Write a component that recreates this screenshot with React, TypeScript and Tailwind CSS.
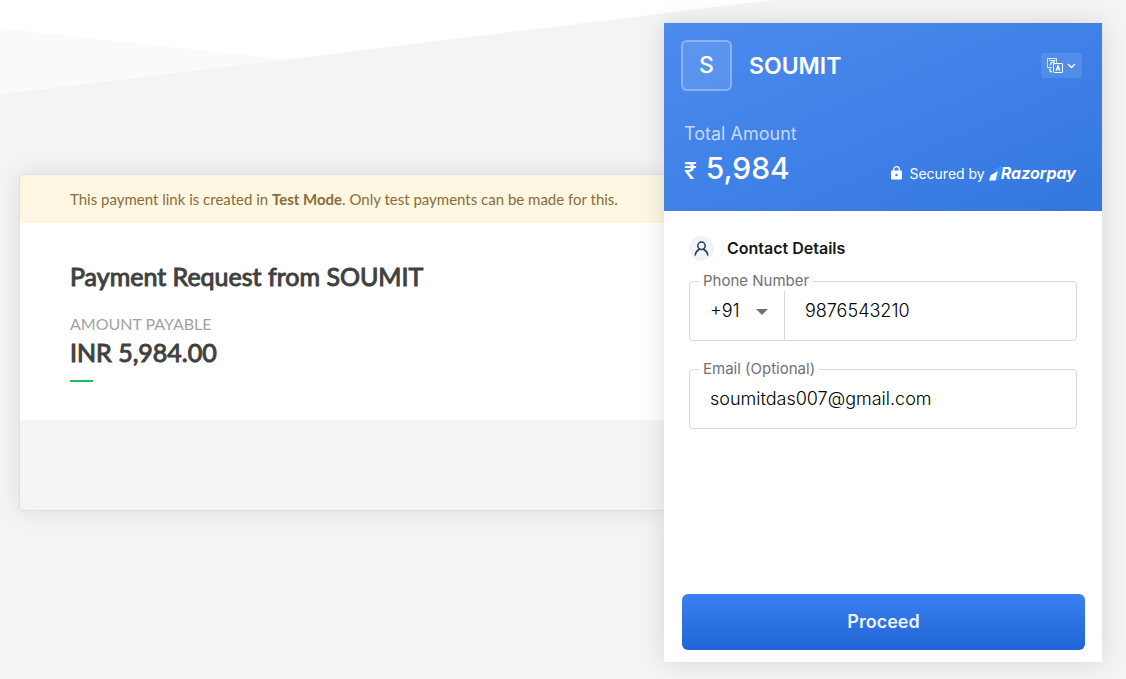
import { useState } from "react";
import type { ReactNode } from "react";

function PageBackdrop() {
  return (
    <svg
      className="absolute left-0 top-0 h-[95px] w-[772px]"
      viewBox="0 0 772 95"
      preserveAspectRatio="none"
      aria-hidden="true"
    >
      <polygon points="0,0 772,0 0,94.5" fill="#fafafa" />
      <polygon points="0,0 772,0 286,59.4 0,28.5" fill="#ffffff" />
    </svg>
  );
}

function LanguageIcon() {
  return (
    <svg width="16" height="16" viewBox="0 0 16 16" fill="none" stroke="#fff" aria-hidden="true">
      <path d="M9.5 4.5v-4h-9v9h4.500" strokeOpacity="0.8" />
      <path d="M2 2.500h6.500M5.500 2.500c.8 1.800-1 2.600-2.500 2.200M3 4.800c2 .2 2 2.500-.5 2M5.500 4.600h1.500M7 2.500v4" strokeWidth="0.9" />
      <path d="M3 10.500v2c0 1 .5 1.500 2 1.500" strokeWidth="1.300" />
      <rect x="6.500" y="5.500" width="9" height="9" rx="0.5" />
      <path d="M9 12.800l2-5.200 2 5.200M9.700 11.200h2.600" strokeWidth="1.200" />
    </svg>
  );
}

function RazorpayLogo() {
  return (
    <span className="flex items-center">
      <svg width="14" height="16" viewBox="0 0 14 16" aria-hidden="true">
        <path d="M4.200 5.200 13.600 0 9.600 15.500H6.200L8.600 6z" fill="#3395ff" />
        <path d="M1.800 10.300 8.800 6 6.600 15.500H0z" fill="#fff" />
      </svg>
      <span className="-ml-0.5 font-[Inter,sans-serif] text-[16px] leading-5 font-bold italic">Razorpay</span>
    </span>
  );
}

function Field({ id, label, children }: { id: string; label: string; children: ReactNode }) {
  return (
    <div className="relative flex h-15 rounded border border-[#d8d8dc]">
      <label
        htmlFor={id}
        className="absolute -top-[11px] left-[9px] z-10 bg-white px-1 text-[15px] leading-5 text-[#6f7177]"
      >
        {label}
      </label>
      {children}
    </div>
  );
}

function PaymentRequest() {
  return (
    <main className="mt-[151px] min-w-0 flex-1 self-start rounded-l border border-r-0 border-[#dddfe2] font-[Lato,sans-serif] shadow-[0_0_24px_rgba(0,0,0,0.1)]">
      <p className="rounded-tl bg-[#fdf6e1] py-3.5 pl-[50px] text-[15px] leading-5 whitespace-nowrap text-[#8a6d3b]">
        This payment link is created in <strong>Test Mode</strong>. Only test payments can be made for this.
      </p>
      <section className="h-[197px] bg-white pt-[35px] pl-[50px] text-[#414141]">
        <h1 className="text-[25px] leading-9 font-normal whitespace-nowrap [-webkit-text-stroke:1px_#414141]">
          Payment Request from SOUMIT
        </h1>
        <h2 className="mt-5 text-[16px] leading-5 text-[#a2a2a2]">AMOUNT PAYABLE</h2>
        <p className="text-[25px] leading-9 font-normal [-webkit-text-stroke:1px_#414141]">INR 5,984.00</p>
        <div className="mt-2.5 h-0.5 w-[23px] bg-[#1fbf5c]" />
      </section>
      <div className="h-[90px] rounded-bl bg-[#f4f4f4]" />
    </main>
  );
}

function CheckoutHeader() {
  return (
    <header className="flex h-[188px] flex-col justify-between bg-linear-to-br from-[#4c8bef] to-[#3377df] pt-[17px] pr-5 pb-5 pl-[17px] text-white">
      <div className="flex items-center">
        <div className="flex size-[51px] items-center justify-center rounded-md border-2 border-white/30 bg-white/10 text-[23px] font-medium">
          S
        </div>
        <h2 className="ml-[17px] text-[23px] leading-8 font-semibold">SOUMIT</h2>
        <button
          type="button"
          aria-label="Change language"
          className="ml-auto flex h-[25px] w-[41px] items-center justify-center gap-1 rounded-[3px] bg-white/10"
        >
          <LanguageIcon />
          <svg width="9" height="6" viewBox="0 0 9 6" fill="none" stroke="#fff" strokeWidth="1.300" aria-hidden="true">
            <path d="M1 1l3.500 3.500L8 1" />
          </svg>
        </button>
      </div>
      <div className="flex items-end justify-between pr-1.5 pl-[3px]">
        <div>
          <p className="text-[18px] leading-7 text-white/70">Total Amount</p>
          <p className="flex items-baseline gap-[9px] text-[30px] leading-10 font-medium">
            <span className="text-[23px]">₹</span>
            <span>5,984</span>
          </p>
        </div>
        <div className="flex h-9 items-center text-[14px]">
          <svg width="11" height="14" viewBox="0 0 11 14" aria-hidden="true">
            <path d="M2.700 5.500V3.500a2.800 2.800 0 0 1 5.600 0v2" fill="none" stroke="#fff" strokeWidth="1.300" />
            <rect y="4.500" width="11" height="9" rx="1" fill="#fff" />
            <circle cx="5.500" cy="9" r="1.200" fill="#3d7de5" />
          </svg>
          <span className="mr-1 ml-[7px]">Secured by</span>
          <RazorpayLogo />
        </div>
      </div>
    </header>
  );
}

function Checkout() {
  const [phone, setPhone] = useState("9876543210");
  const [email, setEmail] = useState("soumitdas007@gmail.com");
  return (
    <aside className="relative z-10 flex min-h-[639px] w-[438px] shrink-0 flex-col bg-white font-[Inter,sans-serif] shadow-[0_0_24px_rgba(0,0,0,0.12)]">
      <CheckoutHeader />
      <form className="flex flex-1 flex-col" onSubmit={(e) => e.preventDefault()}>
        <div className="px-[25px] pt-[25px]">
          <div className="flex items-start gap-[13px]">
            <span className="flex size-[25px] items-center justify-center rounded-full bg-[#f0f4fa]">
              <svg width="15" height="15" viewBox="0 0 15 15" fill="none" stroke="#2b3a4e" strokeWidth="1.500" strokeLinecap="round" aria-hidden="true">
                <circle cx="7.500" cy="4.800" r="3.700" />
                <path d="M1.200 14c.5-3 1.800-4.500 4-5.500M13.800 14c-.5-3-1.800-4.500-4-5.500" />
              </svg>
            </span>
            <h3 className="text-[16px] leading-6 font-semibold text-[#15181c]">Contact Details</h3>
          </div>
          <div className="mt-5 flex flex-col gap-7">
            <Field id="phone" label="Phone Number">
              <div className="relative w-[94px]">
                <select
                  aria-label="Country code"
                  className="h-full w-full appearance-none bg-transparent pb-0.5 pl-5 text-[18px] font-light text-black outline-none"
                >
                  <option>+91</option>
                </select>
                <svg className="pointer-events-none absolute top-[27px] right-4" width="12" height="6" viewBox="0 0 12 6" aria-hidden="true">
                  <path d="M0 0h12L6 6z" fill="#757078" />
                </svg>
              </div>
              <div className="mt-2 w-px bg-[#d8d8dc]" />
              <input
                id="phone"
                type="tel"
                value={phone}
                onChange={(e) => setPhone(e.target.value)}
                className="min-w-0 flex-1 bg-transparent px-5 pb-0.5 text-[18px] font-light text-black outline-none"
              />
            </Field>
            <Field id="email" label="Email (Optional)">
              <input
                id="email"
                type="email"
                value={email}
                onChange={(e) => setEmail(e.target.value)}
                className="min-w-0 flex-1 bg-transparent px-5 pb-0.5 text-[18px] font-light text-black outline-none"
              />
            </Field>
          </div>
        </div>
        <div className="mt-auto pr-[17px] pb-3 pl-[18px]">
          <button
            type="submit"
            className="h-14 w-full rounded-md bg-linear-to-b from-[#3a80f0] to-[#2065d5] pb-0.5 text-[18px] font-semibold text-[#edf2fc]"
          >
            Proceed
          </button>
        </div>
      </form>
    </aside>
  );
}

export default function App() {
  return (
    <div className="relative flex min-h-screen items-start overflow-hidden bg-[#f4f4f4] pt-[23px] pr-6 pb-4 pl-[19px]">
      <PageBackdrop />
      <div className="relative flex min-w-0 flex-1 items-start">
        <PaymentRequest />
        <Checkout />
      </div>
    </div>
  );
}
